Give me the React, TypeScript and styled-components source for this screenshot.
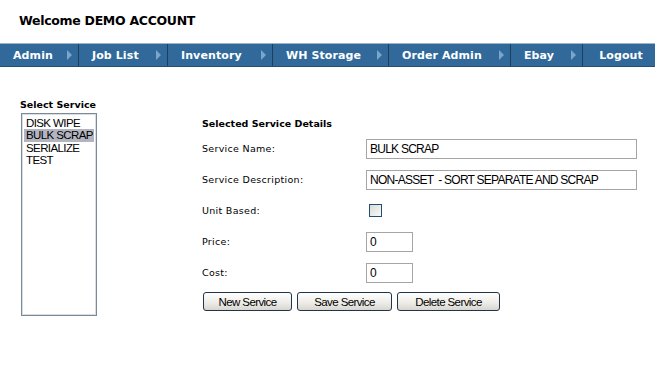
import styled, { createGlobalStyle } from 'styled-components';

const GlobalStyle = createGlobalStyle`
  html, body {
    margin: 0;
    padding: 0;
    background: #ffffff;
  }
`;

const Page = styled.div`
  width: 671px;
  height: 366px;
  overflow: hidden;
  font-family: 'DejaVu Sans', Verdana, sans-serif;
`;

const Welcome = styled.h1`
  margin: 0;
  padding: 13px 0 0 19px;
  height: 31px;
  box-sizing: border-box;
  font-size: 12.5px;
  font-weight: bold;
  color: #000;
  letter-spacing: -0.3px;
`;

const NavBar = styled.nav`
  display: flex;
  width: 655px;
  height: 24px;
  margin-top: 12px;
  background: #30699a;
  border-top: 1px solid #9fb4c6;
  border-bottom: 1px solid #274f70;
  box-sizing: border-box;
`;

const NavItem = styled.a<{ $w: number; $last?: boolean }>`
  display: flex;
  align-items: center;
  justify-content: ${(p) => (p.$last ? 'center' : 'space-between')};
  width: ${(p) => p.$w}px;
  padding: ${(p) => (p.$last ? '0 0 0 4px' : '0 6px 0 13px')};
  box-sizing: border-box;
  border-right: ${(p) => (p.$last ? 'none' : '1px solid #1d3f5c')};
  color: #ffffff;
  font-size: 11px;
  font-weight: bold;
  text-decoration: none;
  letter-spacing: 0.1px;
`;

const Arrow = styled.span`
  width: 0;
  height: 0;
  border-top: 5px solid transparent;
  border-bottom: 5px solid transparent;
  border-left: 5px solid #7aa6cc;
`;

const Body = styled.div`
  display: flex;
  padding: 32px 0 0 20px;
`;

const ServiceColumn = styled.div`
  display: flex;
  flex-direction: column;
  width: 182px;
`;

const SmallHeading = styled.div`
  font-size: 9.5px;
  font-weight: bold;
  color: #000;
  height: 14px;
  line-height: 12px;
`;

const ListBox = styled.div`
  width: 76px;
  height: 203px;
  margin-left: 1px;
  box-sizing: border-box;
  border: 1px solid #7d8a96;
  box-shadow: inset 0 0 0 1px #d6dde3;
  padding: 3px 2px;
  font-family: 'Liberation Sans', Arial, sans-serif;
  font-size: 11.5px;
  letter-spacing: -0.6px;
`;

const ListOption = styled.div<{ $selected?: boolean }>`
  height: 12.3px;
  line-height: 12.3px;
  padding-left: 2px;
  white-space: nowrap;
  overflow: hidden;
  background: ${(p) => (p.$selected ? '#b2b4bf' : 'transparent')};
  color: #000;
`;

const Details = styled.div`
  display: flex;
  flex-direction: column;
  padding-top: 19px;
`;

const Form = styled.div`
  display: grid;
  grid-template-columns: 164px auto;
  grid-auto-rows: 31px;
  align-items: center;
  margin-top: 1px;
`;

const Label = styled.label`
  font-size: 9.5px;
  color: #000;
  letter-spacing: 0.3px;
`;

const TextInput = styled.div<{ $w: number }>`
  width: ${(p) => p.$w}px;
  height: 20px;
  box-sizing: border-box;
  border: 1px solid #a5a5a5;
  padding: 0 3px;
  font-family: 'Liberation Sans', Arial, sans-serif;
  font-size: 12px;
  letter-spacing: -0.75px;
  line-height: 18px;
  white-space: pre;
  color: #000;
`;

const CheckBox = styled.div`
  width: 13px;
  height: 13px;
  margin-left: 3px;
  box-sizing: border-box;
  border: 1px solid #1f4e77;
  background: linear-gradient(135deg, #dcdcd6, #f8f8f6);
`;

const ButtonRow = styled.div`
  display: flex;
  gap: 5px;
  margin-top: 4px;
  margin-left: 1px;
`;

const Button = styled.button<{ $w: number }>`
  width: ${(p) => p.$w}px;
  height: 19px;
  padding: 0;
  border: 1px solid #22344a;
  border-radius: 3px;
  background: linear-gradient(#ffffff, #ecebe6 60%, #d6d5ce);
  font-family: 'Liberation Sans', Arial, sans-serif;
  font-size: 11.5px;
  letter-spacing: -0.6px;
  color: #000;
`;

const navItems = [
  { label: 'Admin', w: 79 },
  { label: 'Job List', w: 89 },
  { label: 'Inventory', w: 105 },
  { label: 'WH Storage', w: 116 },
  { label: 'Order Admin', w: 122 },
  { label: 'Ebay', w: 72 },
];

const services = ['DISK WIPE', 'BULK SCRAP', 'SERIALIZE', 'TEST'];

const App = () => {
  return (
    <Page>
      <GlobalStyle />
      <Welcome>Welcome DEMO ACCOUNT</Welcome>

      <NavBar>
        {navItems.map((item) => (
          <NavItem key={item.label} $w={item.w}>
            {item.label}
            <Arrow />
          </NavItem>
        ))}
        <NavItem $w={72} $last>
          Logout
        </NavItem>
      </NavBar>

      <Body>
        <ServiceColumn>
          <SmallHeading>Select Service</SmallHeading>
          <ListBox>
            {services.map((s) => (
              <ListOption key={s} $selected={s === 'BULK SCRAP'}>
                {s}
              </ListOption>
            ))}
          </ListBox>
        </ServiceColumn>

        <Details>
          <SmallHeading>Selected Service Details</SmallHeading>
          <Form>
            <Label>Service Name:</Label>
            <TextInput $w={271}>BULK SCRAP</TextInput>

            <Label>Service Description:</Label>
            <TextInput $w={271}>NON-ASSET  - SORT SEPARATE AND SCRAP</TextInput>

            <Label>Unit Based:</Label>
            <CheckBox />

            <Label>Price:</Label>
            <TextInput $w={47}>0</TextInput>

            <Label>Cost:</Label>
            <TextInput $w={47}>0</TextInput>
          </Form>
          <ButtonRow>
            <Button $w={89}>New Service</Button>
            <Button $w={95}>Save Service</Button>
            <Button $w={103}>Delete Service</Button>
          </ButtonRow>
        </Details>
      </Body>
    </Page>
  );
};

export default App;
